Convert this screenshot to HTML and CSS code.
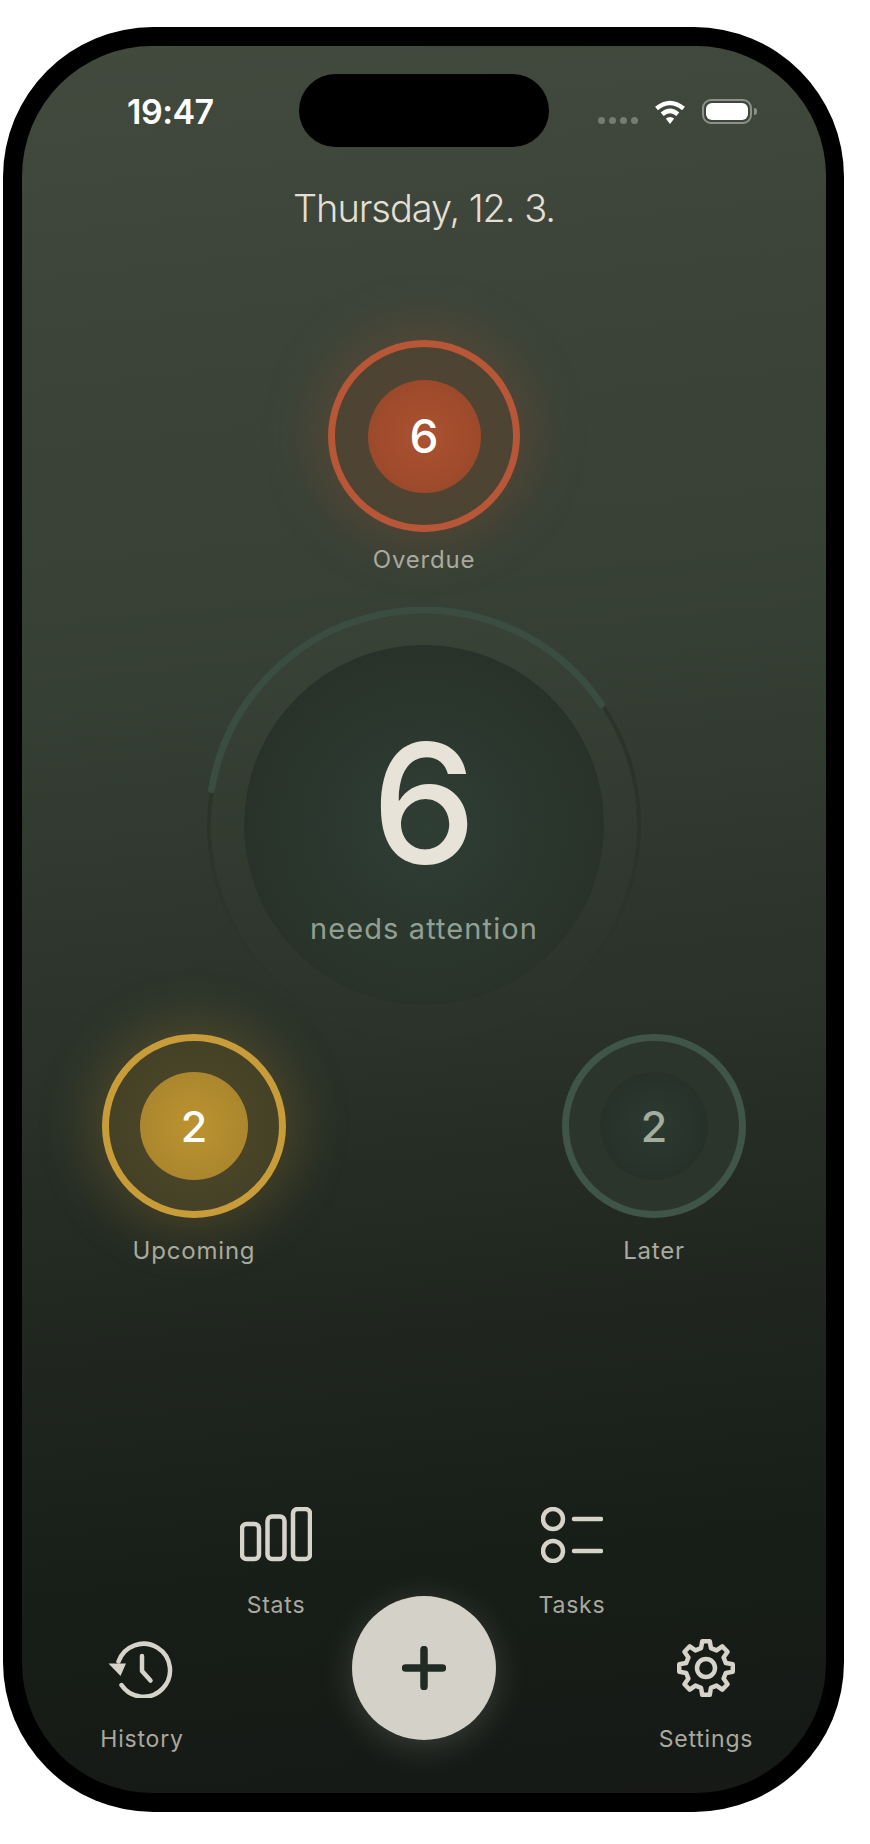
FILE: index.html
```html
<!DOCTYPE html>
<html lang="en">
<head>
<meta charset="utf-8">
<title>Dashboard</title>
<link rel="stylesheet" href="styles.css">
</head>
<body>
<main class="phone">
  <div class="screen">
    <header class="status">
      <div class="status-left"><span class="time">19:47</span></div>
      <div class="island"></div>
      <div class="status-right">
        <div class="signal"><i></i><i></i><i></i><i></i></div>
        <svg class="wifi" viewBox="0 0 32 25" width="32" height="25">
          <path class="wifi-arc" d="M2.5 9.5Q16-1.5 29.5 9.5M8.2 15.2Q16 8.6 23.8 15.2"/>
          <path class="wifi-tip" d="M11.8 19.6Q16 16.4 20.2 19.6L16 25Z"/>
        </svg>
        <div class="battery"><div class="battery-fill"></div></div>
        <div class="battery-nub"></div>
      </div>
    </header>

    <h1 class="date">Thursday, 12. 3.</h1>

    <section class="node node-large node-overdue">
      <div class="ring"><div class="core">6</div></div>
      <div class="node-label">Overdue</div>
    </section>

    <section class="dial">
      <svg class="dial-ring" viewBox="0 0 436 436" width="436" height="436">
        <defs>
          <linearGradient id="trackStroke" x1="0" y1="0" x2="0" y2="1">
            <stop offset="0.4" class="stop-a"/>
            <stop offset="0.95" class="stop-b"/>
          </linearGradient>
          <linearGradient id="trackFill" x1="0" y1="0" x2="0" y2="1">
            <stop offset="0" class="fill-a"/>
            <stop offset="0.9" class="fill-b"/>
          </linearGradient>
        </defs>
        <circle class="dial-track" cx="218" cy="218" r="215"/>
        <path class="dial-arc" d="M5.5 182.5A215 215 0 0 1 395.5 97.5"/>
      </svg>
      <div class="dial-core">
        <div class="dial-number">6</div>
        <div class="dial-text">needs attention</div>
      </div>
    </section>

    <div class="node-row">
      <section class="node node-upcoming">
        <div class="ring"><div class="core">2</div></div>
        <div class="node-label">Upcoming</div>
      </section>
      <section class="node node-later">
        <div class="ring"><div class="core">2</div></div>
        <div class="node-label">Later</div>
      </section>
    </div>

    <nav class="nav-upper">
      <a class="nav-item">
        <svg class="nav-icon" viewBox="0 0 72 56" width="72" height="56">
          <rect x="2" y="17" width="17" height="35" rx="4.5"/>
          <rect x="27.5" y="9.5" width="17" height="42.5" rx="4.5"/>
          <rect x="53" y="2" width="17" height="50" rx="4.5"/>
        </svg>
        <span class="nav-label">Stats</span>
      </a>
      <a class="nav-item">
        <svg class="nav-icon" viewBox="0 0 62 56" width="62" height="56">
          <circle cx="12" cy="12" r="10"/>
          <circle cx="12" cy="44" r="10"/>
          <path d="M33 12H60M33 44H60"/>
        </svg>
        <span class="nav-label">Tasks</span>
      </a>
    </nav>

    <nav class="nav-lower">
      <a class="nav-item nav-side">
        <svg class="nav-icon" viewBox="-36 -30 72 60" width="72" height="60">
          <path d="M-23.5-6.5A26.5 26.5 0 1 1-20.5 17"/>
          <path d="M0-12V3L8.5 12.5"/>
          <path class="solid" d="M-33.5-4.5H-16L-21.5 8Z"/>
        </svg>
        <span class="nav-label">History</span>
      </a>
      <button class="fab" type="button" aria-label="Add">
        <svg viewBox="0 0 44 44" width="44" height="44"><path d="M22 3.5V40.5M3.5 22H40.5"/></svg>
      </button>
      <a class="nav-item nav-side">
        <svg class="nav-icon" viewBox="-30 -30 60 60" width="60" height="60">
          <path d="M-4.96-19.89L-3.76-26.74H3.76L4.96-19.89L10.56-17.57L16.25-21.57L21.57-16.25L17.57-10.56L19.89-4.96L26.74-3.76V3.76L19.89 4.96L17.57 10.56L21.57 16.25L16.25 21.57L10.56 17.57L4.96 19.89L3.76 26.74H-3.76L-4.96 19.89L-10.56 17.57L-16.25 21.57L-21.57 16.25L-17.57 10.56L-19.89 4.96L-26.74 3.76V-3.76L-19.89-4.96L-17.57-10.56L-21.57-16.25L-16.25-21.57L-10.56-17.57Z"/>
          <circle cx="0" cy="0" r="9"/>
        </svg>
        <span class="nav-label">Settings</span>
      </a>
    </nav>
  </div>
</main>
</body>
</html>
```
FILE: styles.css
```css
* { box-sizing: border-box; }

html, body {
  margin: 0;
  padding: 0;
  background: #fff;
}

body {
  width: 870px;
  height: 1844px;
  overflow: hidden;
  font-family: Inter, "Liberation Sans", sans-serif;
}

.phone {
  width: 841px;
  height: 1785px;
  margin: 27px 0 0 3px;
  border-radius: 150px;
  background: #000;
  padding: 19px 18px 19px 19px;
}

.screen {
  height: 100%;
  border-radius: 130px;
  overflow: hidden;
  background: linear-gradient(174deg, #42493d 0%, #3d453a 14%, #363f34 36%, #2a3229 56%, #20261f 72%, #171d17 86%, #161916 100%);
}

/* status bar */
.status {
  display: grid;
  grid-template-columns: 1fr 250px 1fr;
  align-items: center;
  height: 73px;
  margin-top: 28px;
}

.status-left { padding-left: 105px; }

.time {
  display: block;
  margin-top: 3px;
  color: #fff;
  font-size: 34px;
  font-weight: 600;
  line-height: 36px;
  letter-spacing: -0.5px;
}

.island {
  height: 73px;
  border-radius: 37px;
  background: #000;
}

.status-right {
  display: flex;
  align-items: center;
  padding: 2px 0 0 49px;
}

.signal {
  display: flex;
  gap: 4px;
  margin: 17px 16px 0 0;
}

.signal i {
  width: 7px;
  height: 7px;
  border-radius: 50%;
  background: #777c71;
}

.wifi { display: block; }

.wifi-arc {
  fill: none;
  stroke: #fff;
  stroke-width: 4.6;
  stroke-linecap: butt;
}

.wifi-tip { fill: #fff; }

.battery {
  width: 50px;
  height: 25px;
  margin-left: 16px;
  padding: 2px;
  border: 2px solid #8d9188;
  border-radius: 9px;
}

.battery-fill {
  height: 100%;
  border-radius: 6px;
  background: #fff;
}

.battery-nub {
  width: 3px;
  height: 7px;
  margin-left: 2px;
  border-radius: 0 3px 3px 0;
  background: #8d9188;
}

/* date */
.date {
  margin: 39px 0 0;
  color: #e3dfd4;
  font-size: 38px;
  font-weight: 300;
  line-height: 44px;
  letter-spacing: -1.05px;
  text-align: center;
}

/* status nodes */
.node {
  display: flex;
  flex-direction: column;
  align-items: center;
  width: 184px;
}

.node-large {
  width: 192px;
  margin: 110px auto 0;
}

.ring {
  display: flex;
  align-items: center;
  justify-content: center;
  width: 184px;
  height: 184px;
  border: 7px solid;
  border-radius: 50%;
}

.node-large .ring {
  width: 192px;
  height: 192px;
}

.core {
  display: flex;
  align-items: center;
  justify-content: center;
  width: 108px;
  height: 108px;
  border-radius: 50%;
  color: #fff;
  font-size: 43px;
  font-weight: 500;
}

.node-large .core {
  width: 113px;
  height: 113px;
  font-size: 46px;
}

.node-label {
  margin-top: 19px;
  color: #a9a99f;
  font-size: 24px;
  line-height: 28px;
  letter-spacing: 0.8px;
  white-space: nowrap;
}

.node-large .node-label { margin-top: 14px; }

.node-overdue .ring {
  border-color: #b85737;
  background: radial-gradient(circle, #504432 40%, #4a4332 100%);
  box-shadow: 0 0 50px 16px rgba(150, 85, 50, 0.26);
}

.node-overdue .core {
  background: radial-gradient(circle, #ab5231 0%, #964629 100%);
}

.node-upcoming .ring {
  border-color: #c99c3a;
  background: radial-gradient(circle, #4a4528 40%, #413e25 100%);
  box-shadow: 0 0 50px 16px rgba(170, 135, 50, 0.24);
}

.node-upcoming .core {
  background: radial-gradient(circle, #bb9330 0%, #a6812c 100%);
}

.node-later .ring {
  border-color: #3e5548;
  background: #2c352c;
}

.node-later .core {
  background: radial-gradient(circle, #2c3a31 0%, #242d26 100%);
  color: #a3ad9f;
}

/* central dial */
.dial {
  position: relative;
  display: flex;
  align-items: center;
  justify-content: center;
  width: 436px;
  height: 436px;
  margin: 33px auto 0;
}

.dial-ring {
  position: absolute;
  inset: 0;
}

.stop-a { stop-color: #262e23; stop-opacity: 0.6; }
.stop-b { stop-color: #262e23; stop-opacity: 0; }
.fill-a { stop-color: #424e40; stop-opacity: 0.12; }
.fill-b { stop-color: #424e40; stop-opacity: 0.04; }

.dial-track {
  fill: url(#trackFill);
  stroke: url(#trackStroke);
  stroke-width: 4;
}

.dial-arc {
  fill: none;
  stroke: #3b4d40;
  stroke-width: 7;
  stroke-linecap: round;
}

.dial-core {
  position: relative;
  display: flex;
  flex-direction: column;
  align-items: center;
  width: 360px;
  height: 360px;
  border-radius: 50%;
  background: radial-gradient(circle, #2f3e35 0%, #2a352c 55%, #242c24 100%);
}

.dial-number {
  margin-top: 63px;
  color: #e8e3d9;
  font-size: 166px;
  font-weight: 500;
  line-height: 190px;
}

.dial-text {
  margin-top: 13px;
  color: #929f93;
  font-size: 29px;
  line-height: 36px;
  letter-spacing: 1.1px;
}

.node-row {
  display: flex;
  justify-content: space-between;
  margin-top: -9px;
  padding: 0 80px;
}

/* navigation */
.nav-upper {
  display: flex;
  justify-content: center;
  gap: 196px;
  margin-top: 242px;
}

.nav-item {
  display: flex;
  flex-direction: column;
  align-items: center;
  width: 100px;
}

.nav-icon {
  display: block;
  fill: none;
  stroke: #d6d3ca;
  stroke-width: 4.5;
  stroke-linecap: round;
  stroke-linejoin: round;
}

.nav-icon .solid {
  fill: #d6d3ca;
  stroke: none;
}

.nav-label {
  margin-top: 28px;
  color: #a9a99f;
  font-size: 23px;
  line-height: 28px;
  letter-spacing: 0.8px;
}

.nav-lower {
  display: flex;
  justify-content: space-between;
  align-items: flex-start;
  margin-top: -23px;
  padding: 0 60px;
}

.nav-side {
  width: 120px;
  padding-top: 42px;
}

.nav-side .nav-label { margin-top: 27px; }

.fab {
  display: flex;
  align-items: center;
  justify-content: center;
  width: 144px;
  height: 144px;
  padding: 0;
  border: 0;
  border-radius: 50%;
  background: #d4d1c9;
  box-shadow: 0 6px 34px rgba(212, 209, 201, 0.2);
}

.fab svg {
  fill: none;
  stroke: #1f2b23;
  stroke-width: 7.5;
  stroke-linecap: round;
}
```
